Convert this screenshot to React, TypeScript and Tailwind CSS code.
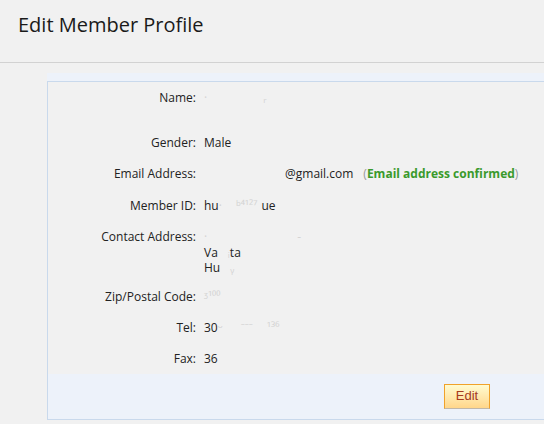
import React from 'react';

// faint leftovers of redacted values
function Smudge({ children }: { children: React.ReactNode }) {
    return <span className="text-[#d4d4d4]">{children}</span>;
}

type Row = { label: string; value: React.ReactNode; pad: string };

const rows: Row[] = [
    {
        label: 'Name:',
        value: (
            <>
                <Smudge>·</Smudge>
                <span className="inline-block w-[56px]"></span>
                <Smudge>ᵣ</Smudge>
            </>
        ),
        pad: 'pt-[8px] pb-[21px]',
    },
    { label: 'Gender:', value: 'Male', pad: 'py-[8px]' },
    {
        label: 'Email Address:',
        value: (
            <>
                <span className="inline-block w-[81px]"></span>
                @gmail.com
                <span className="inline-block w-[10px]"></span>
                <span className="text-[#999]">(</span>
                <span className="font-bold text-[#3a9a2c]">Email address confirmed</span>
                <span className="text-[#999]">)</span>
            </>
        ),
        pad: 'py-[8px]',
    },
    {
        label: 'Member ID:',
        value: (
            <>
                hu<Smudge>·</Smudge>
                <span className="inline-block w-[14px]"></span>
                <Smudge>ᵇ⁴¹²⁷</Smudge>
                <span className="inline-block w-[4px]"></span>
                ue
            </>
        ),
        pad: 'py-[8px]',
    },
    {
        label: 'Contact Address:',
        value: (
            <>
                <div>
                    <Smudge>·</Smudge>
                    <span className="inline-block w-[90px]"></span>
                    <Smudge>-</Smudge>
                </div>
                <div>
                    Va<span className="inline-block w-[10px]"></span>
                    <Smudge>ᵢ</Smudge>ta
                </div>
                <div>
                    Hu<span className="inline-block w-[10px]"></span>
                    <Smudge>ᵧ</Smudge>
                </div>
            </>
        ),
        pad: 'pt-[8px] pb-[5px]',
    },
    { label: 'Zip/Postal Code:', value: <Smudge>ᶾ¹⁰⁰</Smudge>, pad: 'pt-[8px] pb-[7.5px]' },
    {
        label: 'Tel:',
        value: (
            <>
                30<Smudge>ᵕ</Smudge>
                <span className="inline-block w-[18px]"></span>
                <Smudge>⁻⁻⁻</Smudge>
                <span className="inline-block w-[14px]"></span>
                <Smudge>¹³⁶</Smudge>
            </>
        ),
        pad: 'pt-[8px] pb-[7.5px]',
    },
    { label: 'Fax:', value: '36', pad: 'pt-[8px] pb-[7.5px]' },
];

export default function App() {
    return (
        <div
            className="min-h-[424px] w-[544px] overflow-hidden bg-[#f1f1f1] text-[#222]"
            style={{ fontFamily: '"Open Sans", "Noto Sans", sans-serif' }}
        >
            {/* page header */}
            <div className="h-[63px] border-b border-[#d2d2d2] pl-[18px] pt-[11px]">
                <h1 className="text-[20px] leading-[28px] font-normal text-[#1a1a1a]">Edit Member Profile</h1>
            </div>

            {/* profile panel */}
            <div className="ml-[47px] mt-[10px] w-[520px]">
                <div className="h-[8px] bg-[#edf2fa]"></div>
                <div className="border border-[#c9d9ec]">
                    <div className="text-[12px] leading-[15.5px] text-[#222]">
                        {rows.map((row) => (
                            <div key={row.label} className={`flex ${row.pad}`}>
                                <div className="w-[148px] shrink-0 text-right">{row.label}</div>
                                <div className="pl-[8px]">{row.value}</div>
                            </div>
                        ))}
                    </div>
                    <div className="flex h-[45px] items-center bg-[#edf2fa] pl-[396px]">
                        <button
                            className="h-[25px] w-[46px] border border-[#f0a22a] border-b-[#c0b7a8] bg-gradient-to-b from-[#fffbd0] to-[#ffd68a] text-[13px] text-[#a53a1e]"
                            style={{ fontFamily: '"Liberation Sans", Arial, sans-serif' }}
                        >
                            Edit
                        </button>
                    </div>
                </div>
            </div>
        </div>
    );
}
